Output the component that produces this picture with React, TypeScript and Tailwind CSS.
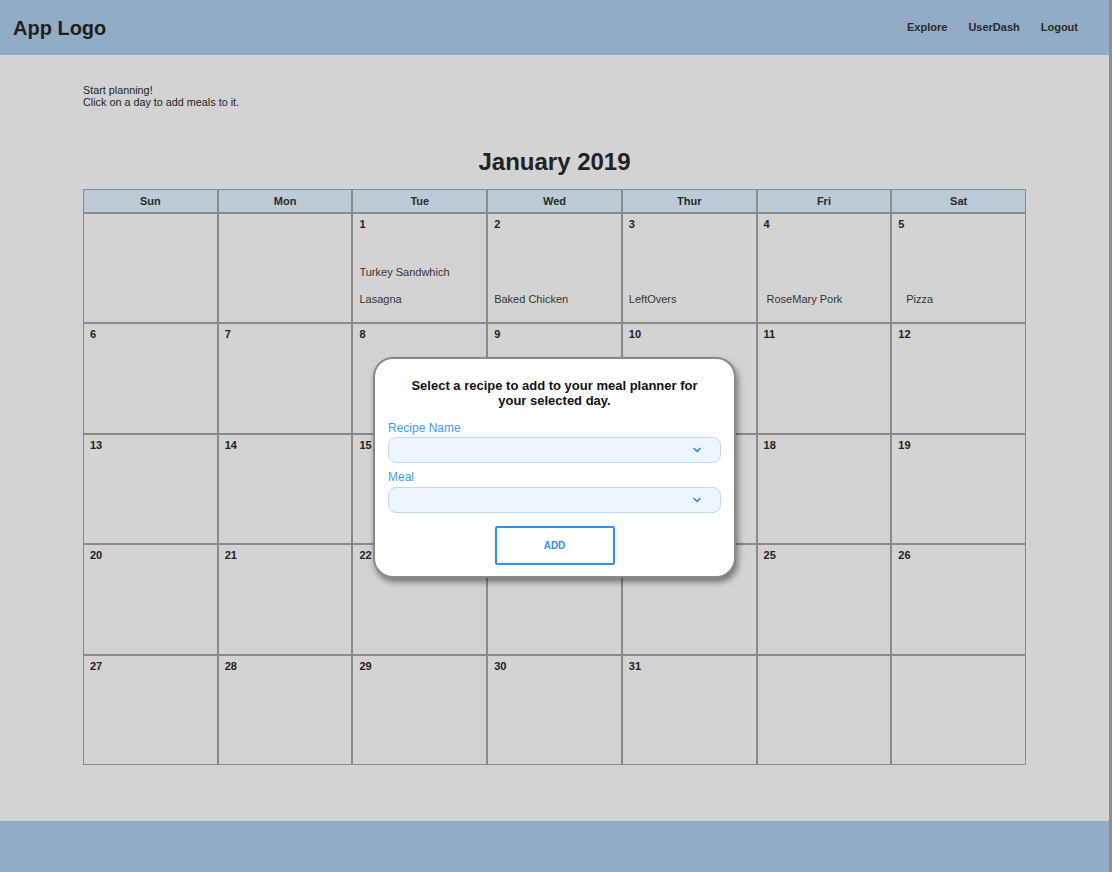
import { ChevronDown } from 'lucide-react';

const days = ['Sun', 'Mon', 'Tue', 'Wed', 'Thur', 'Fri', 'Sat'];

type Cell = { day?: number; meals?: { text: string; indent: string }[] };

const meals: Record<number, { text: string; indent: string }[]> = {
  1: [
    { text: 'Turkey Sandwhich', indent: 'pl-[6px]' },
    { text: 'Lasagna', indent: 'pl-[6px]' },
  ],
  2: [{ text: 'Baked Chicken', indent: 'pl-[6px]' }],
  3: [{ text: 'LeftOvers', indent: 'pl-[6px]' }],
  4: [{ text: 'RoseMary Pork', indent: 'pl-[9px]' }],
  5: [{ text: 'Pizza', indent: 'pl-[14px]' }],
};

const cells: Cell[] = [
  {},
  {},
  ...Array.from({ length: 31 }, (_, i) => ({ day: i + 1, meals: meals[i + 1] })),
  {},
  {},
];

const SelectBox = () => (
  <div className="h-[26px] rounded-lg border border-[#b9dbfb] bg-[#eef6fd] flex items-center justify-end pr-[17px]">
    <ChevronDown size={12} strokeWidth={3.5} className="text-[#2f91ef]" />
  </div>
);

const App = () => {
  return (
    <div className="w-[1112px] h-[872px] flex flex-col bg-[#d3d3d3] text-[#222] border-r-[3px] border-[#8f8f8f] font-['Liberation_Sans',Arial,sans-serif]">
      <header className="h-[55px] shrink-0 bg-[#93acc5] flex items-center justify-between pl-[13px] pr-[31px]">
        <div className="text-[20px] font-bold text-[#1f1f1f]">App Logo</div>
        <nav className="flex gap-[21px] text-[11px] font-bold text-[#2a2a2a]">
          <span>Explore</span>
          <span>UserDash</span>
          <span>Logout</span>
        </nav>
      </header>

      <main className="flex-grow pl-[83px] pt-[29px]">
        <p className="text-[10.8px] leading-[12px] text-[#222]">
          Start planning!
          <br />
          Click on a day to add meals to it.
        </p>

        <h1 className="w-[943px] text-center text-[24px] font-bold mt-[39px] leading-[30px] text-[#222]">
          January 2019
        </h1>

        <div className="relative w-[943px] mt-[12px]">
          <div className="grid grid-cols-7">
            {days.map((d) => (
              <div
                key={d}
                className="h-[24px] bg-[#bccbd6] border border-[#8a8a8a] flex items-center justify-center text-[11px] font-bold text-[#2a2a2a]"
              >
                {d}
              </div>
            ))}
            {cells.map((c, i) => (
              <div key={i} className="h-[110.4px] border border-[#8a8a8a] relative text-[11px] leading-[13px]">
                {c.day && (
                  <div className="absolute left-[6px] top-[4px] font-bold text-[#222]">{c.day}</div>
                )}
                {c.meals && (
                  <div className="absolute left-0 right-0 bottom-[16px] flex flex-col gap-[14px] text-[#333]">
                    {c.meals.map((m) => (
                      <div key={m.text} className={m.indent}>
                        {m.text}
                      </div>
                    ))}
                  </div>
                )}
              </div>
            ))}
          </div>

          <div className="absolute left-[290px] top-[168px] w-[363px] h-[221px] bg-white rounded-[20px] border-2 border-[#8a8a8a] shadow-[2px_4px_6px_rgba(0,0,0,0.45)] px-[13px] pt-[19px]">
            <div className="text-center text-[13px] font-bold leading-[15px] text-[#111]">
              Select a recipe to add to your meal planner for
              <br />
              your selected day.
            </div>
            <div className="mt-[13px] text-[12px] leading-[14px] text-[#3d9ef5]">Recipe Name</div>
            <div className="mt-[2px]">
              <SelectBox />
            </div>
            <div className="mt-[7px] text-[12px] leading-[14px] text-[#3d9ef5]">Meal</div>
            <div className="mt-[3px]">
              <SelectBox />
            </div>
            <div className="flex justify-center mt-[13px]">
              <button className="w-[120px] h-[39px] border-2 border-[#3193f0] rounded-[2px] text-[10px] font-bold text-[#2f8ff0]">
                ADD
              </button>
            </div>
          </div>
        </div>
      </main>

      <footer className="h-[51px] shrink-0 bg-[#93acc5]" />
    </div>
  );
};

export default App;
